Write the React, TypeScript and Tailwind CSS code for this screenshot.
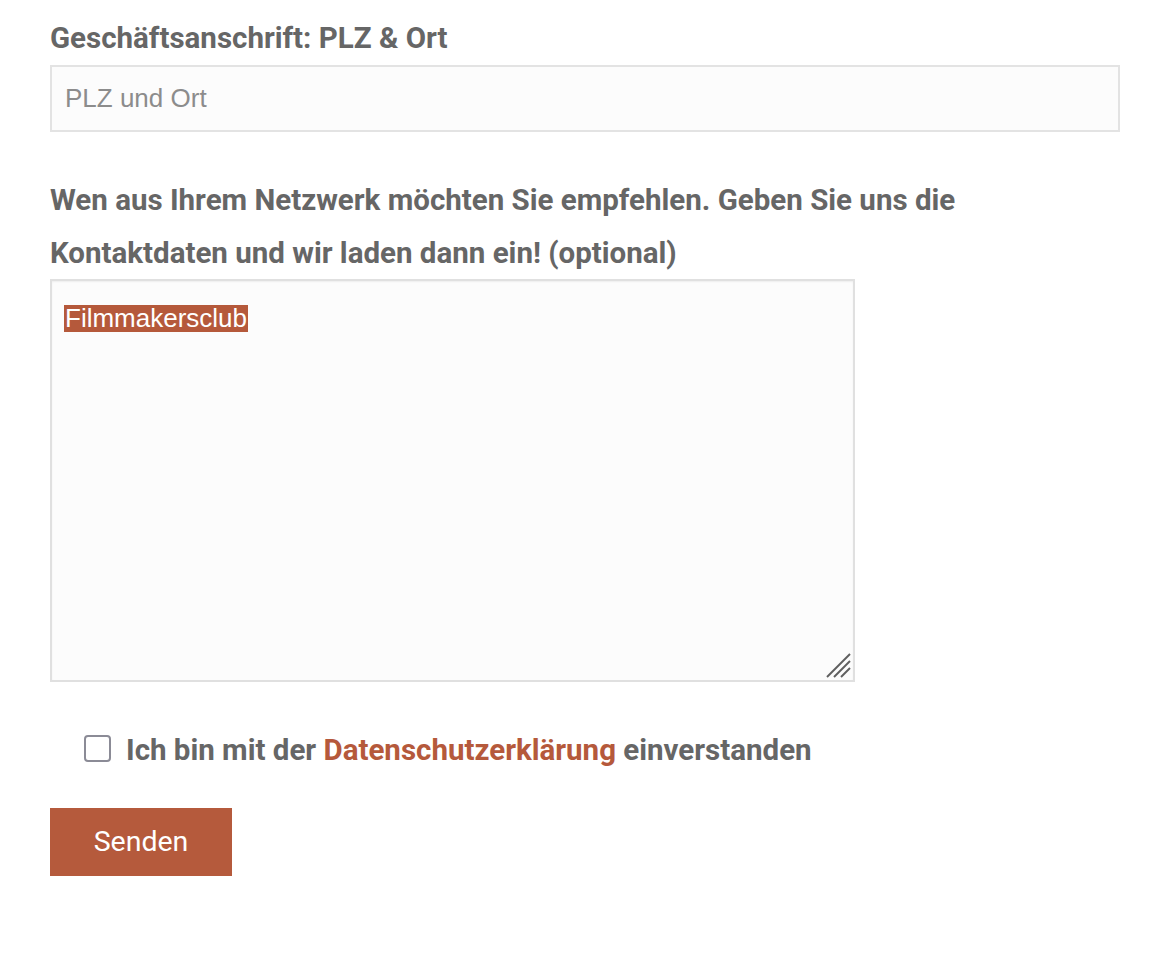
const App = () => {
  return (
    <div className="w-full min-h-screen bg-white" style={{ fontFamily: 'Roboto, "Liberation Sans", sans-serif' }}>
      <form className="flex flex-col px-[50px] pt-[19px] w-[1170px]">
        <label className="text-[29.5px] font-bold text-[#666666] leading-[38px]">
          Geschäftsanschrift: PLZ &amp; Ort
        </label>
        <div className="mt-[8px] w-[1070px] h-[67px] border-2 border-[#e3e3e3] bg-[#fcfcfc] flex items-center px-[13px]">
          <span className="text-[26px] text-[#8c8c8c] font-['Liberation_Sans',Arial,sans-serif]">PLZ und Ort</span>
        </div>

        <label className="mt-[42px] w-[1070px] text-[29.5px] font-bold text-[#666666] leading-[53px]">
          Wen aus Ihrem Netzwerk möchten Sie empfehlen. Geben Sie uns die Kontaktdaten und wir laden dann ein! (optional)
        </label>
        <div className="relative mt-[-1px] w-[805px] h-[403px] border-2 border-[#e0e0e0] bg-[#fcfcfc] shadow-[inset_0_1px_2px_rgba(0,0,0,0.06)] px-[12px] pt-[24px]">
          <span className="bg-[#b5593b] text-white text-[26px] leading-[27px] font-['Liberation_Sans',Arial,sans-serif] px-[1px] inline-block">
            Filmmakersclub
          </span>
          <svg className="absolute right-[2px] bottom-[2px]" width="26" height="26" viewBox="0 0 26 26">
            <line x1="2" y1="25" x2="25" y2="2" stroke="#5f5f5f" strokeWidth="2" />
            <line x1="9" y1="25" x2="25" y2="9" stroke="#5f5f5f" strokeWidth="2" />
            <line x1="16" y1="25" x2="25" y2="16" stroke="#5f5f5f" strokeWidth="2" />
          </svg>
        </div>

        <div className="mt-[47px] ml-[34px] flex items-start gap-x-[15px]">
          <div className="mt-[6px] w-[27px] h-[27px] border-2 border-[#8b8b96] rounded-[4px] bg-white" />
          <span className="mt-[3px] text-[29.5px] font-bold text-[#666666] leading-[36px]">
            Ich bin mit der <span className="text-[#b5593b]">Datenschutzerklärung</span> einverstanden
          </span>
        </div>

        <button
          type="button"
          className="mt-[40px] w-[182px] h-[68px] bg-[#b55a3c] text-white text-[28.5px] flex items-center justify-center"
        >
          Senden
        </button>
      </form>
    </div>
  );
};

export default App;
